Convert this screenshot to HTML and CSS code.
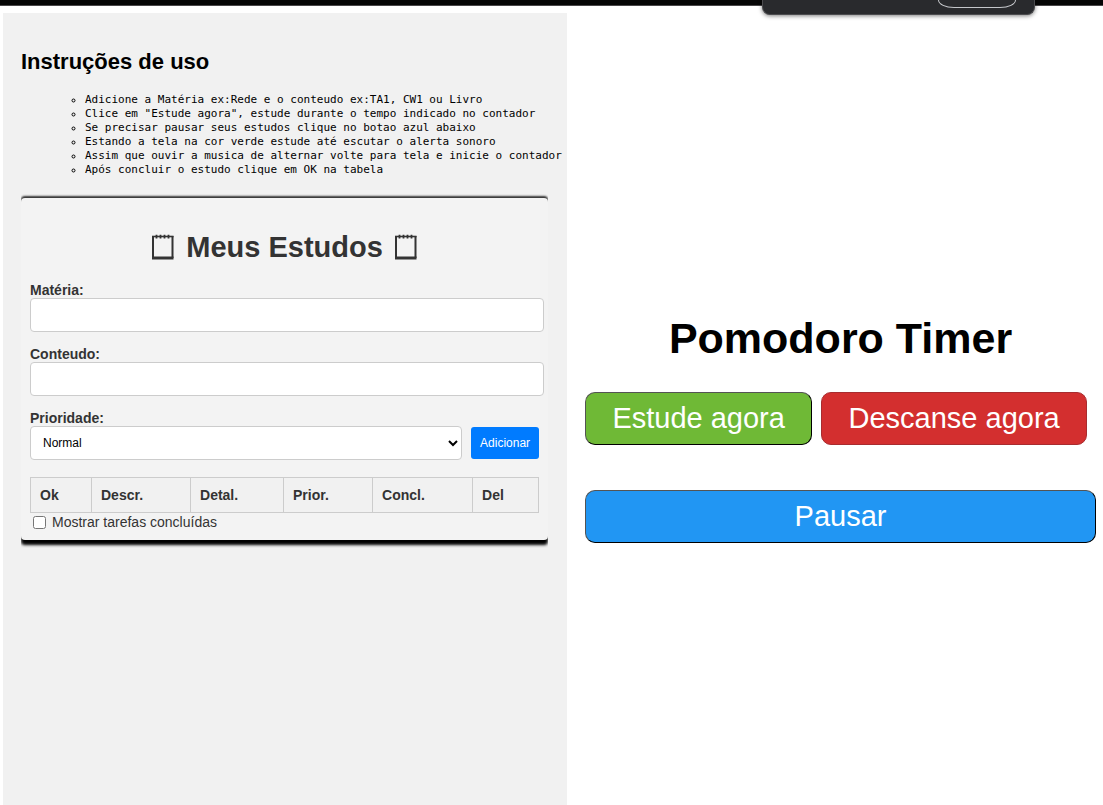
FILE: index.html
```html
<!DOCTYPE html>
<html lang="pt-BR">
<head>
<meta charset="utf-8">
<meta name="viewport" content="width=device-width, initial-scale=1">
<title>Pomodoro Timer</title>
<link rel="stylesheet" href="styles.css">
</head>
<body>
<header class="topbar">
  <div class="popup"><span class="popup-pill"></span></div>
</header>
<main class="layout">
  <section class="panel">
    <h2 class="panel-title">Instruções de uso</h2>
    <ul class="steps">
      <li>Adicione a Matéria ex:Rede e o conteudo ex:TA1, CW1 ou Livro</li>
      <li>Clice em "Estude agora", estude durante o tempo indicado no contador</li>
      <li>Se precisar pausar seus estudos clique no botao azul abaixo</li>
      <li>Estando a tela na cor verde estude até escutar o alerta sonoro</li>
      <li>Assim que ouvir a musica de alternar volte para tela e inicie o contador</li>
      <li>Após concluir o estudo clique em OK na tabela</li>
    </ul>
    <div class="card">
      <h1 class="card-title">
        <svg class="note" viewBox="0 0 22 26" aria-hidden="true"><path d="M1 2v22M20.5 2v22" fill="none" stroke="currentColor" stroke-width="2"/><path d="M0 2.5h21.500" fill="none" stroke="currentColor" stroke-width="1.600"/><path d="M0 24h21.500" fill="none" stroke="currentColor" stroke-width="3"/><path d="M4.500 .8v3.600M8.500 .8v3.600M12.500 .8v3.600M16.500 .8v3.600" stroke="currentColor" stroke-width="1.800"/></svg>
        <span>Meus Estudos</span>
        <svg class="note" viewBox="0 0 22 26" aria-hidden="true"><path d="M1 2v22M20.5 2v22" fill="none" stroke="currentColor" stroke-width="2"/><path d="M0 2.5h21.500" fill="none" stroke="currentColor" stroke-width="1.600"/><path d="M0 24h21.500" fill="none" stroke="currentColor" stroke-width="3"/><path d="M4.500 .8v3.600M8.500 .8v3.600M12.500 .8v3.600M16.500 .8v3.600" stroke="currentColor" stroke-width="1.800"/></svg>
      </h1>
      <form class="form">
        <div class="field">
          <label for="materia">Matéria:</label>
          <input class="control" id="materia" type="text">
        </div>
        <div class="field">
          <label for="conteudo">Conteudo:</label>
          <input class="control" id="conteudo" type="text">
        </div>
        <div class="field">
          <label for="prioridade">Prioridade:</label>
          <div class="row">
            <select class="control" id="prioridade"><option>Normal</option></select>
            <button class="add" type="button">Adicionar</button>
          </div>
        </div>
      </form>
      <table class="tasks">
        <thead>
          <tr><th class="w-ok">Ok</th><th class="w-descr">Descr.</th><th class="w-detal">Detal.</th><th class="w-prior">Prior.</th><th class="w-concl">Concl.</th><th class="w-del">Del</th></tr>
        </thead>
      </table>
      <div class="check">
        <input id="done" type="checkbox"><label for="done">Mostrar tarefas concluídas</label>
      </div>
    </div>
  </section>
  <section class="timer">
    <h1 class="timer-title">Pomodoro Timer</h1>
    <div class="actions">
      <button class="btn study" type="button">Estude agora</button>
      <button class="btn rest" type="button">Descanse agora</button>
    </div>
    <button class="btn pause" type="button">Pausar</button>
  </section>
</main>
</body>
</html>
```
FILE: styles.css
```css
* {
  box-sizing: border-box;
}

body {
  margin: 0;
  min-height: 100vh;
  display: flex;
  flex-direction: column;
  font-family: "Liberation Sans", Arial, sans-serif;
  color: #000;
  background: #fff;
}

.topbar {
  position: relative;
  height: 6px;
  background: #050505;
  border-bottom: 1px solid #484648;
}

.popup {
  position: absolute;
  top: 0;
  right: 68px;
  width: 273px;
  height: 15px;
  background: #292a2d;
  border: 1px solid #4b4b4e;
  border-top: 0;
  border-radius: 0 0 8px 8px;
  box-shadow: 0 1px 4px rgba(0, 0, 0, 0.5);
}

.popup-pill {
  position: absolute;
  top: 0;
  right: 18px;
  width: 78px;
  height: 8px;
  border: 1px solid #c4c6ca;
  border-top: 0;
  border-radius: 0 0 16px 16px / 0 0 8px 8px;
}

.layout {
  flex: 1;
  display: grid;
  grid-template-columns: 20fr 19fr;
  padding: 7px 0 0 3px;
}

.panel {
  min-width: 0;
  padding: 36px 19px 18px 18px;
  background: #f1f1f1;
}

.panel-title {
  margin: 0 0 18px;
  font-size: 22px;
  line-height: 26px;
}

.steps {
  margin: 0 0 21px;
  padding-left: 64px;
  list-style: circle;
  font-family: "DejaVu Sans Mono", monospace;
  font-size: 11px;
  line-height: 14px;
  white-space: nowrap;
}

.card {
  padding: 30px 4px 9px 9px;
  color: #333;
  background: #f3f3f3;
  border-radius: 4px;
  box-shadow: 0 -2px 2px #333, 0 5px 3px #000;
  clip-path: inset(-12px 0);
}

.card-title {
  display: flex;
  justify-content: center;
  align-items: center;
  gap: 12px;
  margin: 0 5px 16px 0;
  font-size: 29px;
  line-height: 38px;
}

.note {
  width: 22px;
  height: 26px;
}

.form {
  display: grid;
  gap: 14px;
  font-size: 14px;
  line-height: 16px;
}

.field {
  display: grid;
}

.field label {
  font-weight: bold;
}

.control {
  width: 100%;
  height: 34px;
  padding: 0 8px;
  border: 1px solid #ccc;
  border-radius: 4px;
  background: #fff;
  color: #000;
  font: 12px "Liberation Sans", Arial, sans-serif;
}

.row {
  display: flex;
  align-items: center;
  gap: 9px;
  margin-right: 5px;
}

.row .control {
  flex: 1;
  min-width: 0;
}

.add {
  width: 68px;
  height: 32px;
  padding: 0;
  border: 0;
  border-radius: 3px;
  background: #007bff;
  color: #fff;
  font: 12px "Liberation Sans", Arial, sans-serif;
}

.tasks {
  width: calc(100% - 5px);
  margin-top: 17px;
  border-collapse: collapse;
  table-layout: fixed;
  font-size: 14px;
  line-height: 16px;
}

.tasks th {
  padding: 9px;
  border: 1px solid #ccc;
  background: #f1f1f1;
  text-align: left;
}

.w-ok {
  width: 61px;
}

.w-descr {
  width: 99px;
}

.w-detal {
  width: 93px;
}

.w-prior {
  width: 89px;
}

.w-concl {
  width: 100px;
}

.w-del {
  width: 66px;
}

.check {
  display: flex;
  align-items: center;
  gap: 6px;
  padding-left: 3px;
  font-size: 14px;
  line-height: 18px;
}

.check input {
  width: 13px;
  height: 13px;
  margin: 0;
}

.timer {
  min-width: 0;
  display: flex;
  flex-direction: column;
  justify-content: center;
  padding: 36px 7px 0 18px;
}

.timer-title {
  margin: 0 0 28px;
  font-size: 43px;
  line-height: 52px;
  text-align: center;
}

.actions {
  display: flex;
  gap: 9px;
  margin: 0 9px 45px 0;
}

.btn {
  height: 53px;
  padding: 0;
  border: 1px outset #000;
  border-radius: 10px;
  color: #fff;
  font: 29px "Liberation Sans", Arial, sans-serif;
}

.study {
  flex: 227 1 0;
  background: #6fb936;
}

.rest {
  flex: 266 1 0;
  background: #d32f2f;
  border: 1px solid #a82c2f;
}

.pause {
  background: #2196f3;
}
```
